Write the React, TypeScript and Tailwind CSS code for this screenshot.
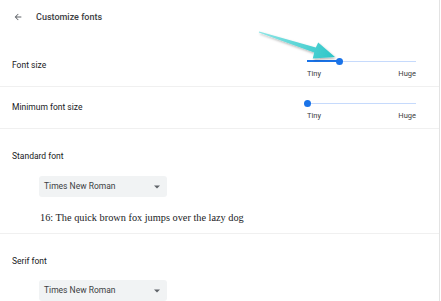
import React from "react";

function Slider({ value }: { value: number }) {
  return (
    <div className="flex w-[109px] flex-col mt-[5px]">
      <div className="relative h-[8px]">
        <div className="absolute left-0 right-0 top-[3.5px] h-[1px] bg-[#c6dafc]" />
        <div className="absolute left-0 top-[3px] h-[2px] bg-[#1a73e8]" style={{ width: `${value}px` }} />
        <div
          className="absolute top-[0.5px] h-[7px] w-[7px] rounded-full bg-[#1a73e8]"
          style={{ left: `${value - 3.5}px` }}
        />
      </div>
      <div className="mt-[4px] flex justify-between text-[7.5px] leading-[10px] text-[#3c4043]">
        <span>Tiny</span>
        <span>Huge</span>
      </div>
    </div>
  );
}

function Select() {
  return (
    <div className="ml-[39px] flex h-[21px] w-[128px] items-center justify-between rounded-[3px] bg-[#f1f3f4] pl-[5px] pr-[7px] text-[8.5px] text-[#3c4043]">
      <span>Times New Roman</span>
      <svg width="6" height="4" viewBox="0 0 6 4">
        <path d="M0 0.5 L6 0.5 L3 3.5 Z" fill="#5f6368" />
      </svg>
    </div>
  );
}

export default function App() {
  return (
    <div className="relative h-[301px] w-[441px] overflow-hidden bg-white" style={{ fontFamily: "Roboto, 'Liberation Sans', sans-serif" }}>
      <div className="h-[301px] w-[440px] border-r border-[#e3e3e3]">
        <div className="flex h-[45px] items-start pt-[11px]">
          <div className="flex h-[12px] items-center pl-[13px]">
            <svg width="10" height="10" viewBox="0 0 24 24">
              <path d="M20 11H7.83l5.59-5.59L12 4l-8 8 8 8 1.41-1.41L7.83 13H20v-2z" fill="#5f6368" />
            </svg>
          </div>
          <span className="ml-[13px] text-[9px] leading-[12px] font-medium text-[#3c4043]">Customize fonts</span>
        </div>

        <div className="flex h-[42px] items-center justify-between border-b border-[#f0f0f0] pl-[12px] pr-[23px]">
          <span className="text-[8.5px] text-[#202124]">Font size</span>
          <Slider value={32} />
        </div>

        <div className="flex h-[42px] items-center justify-between border-b border-[#f0f0f0] pl-[12px] pr-[23px]">
          <span className="text-[8.5px] text-[#202124]">Minimum font size</span>
          <Slider value={0} />
        </div>

        <div className="border-b border-[#f0f0f0] pt-[21px] pb-[8px]">
          <div className="pl-[12px] text-[8.5px] leading-[12px] text-[#202124]">Standard font</div>
          <div className="mt-[14px]">
            <Select />
          </div>
          <div
            className="mt-[14px] pl-[40px] text-[10.3px] leading-[14px] text-[#202124]"
            style={{ fontFamily: "'Liberation Serif', serif" }}
          >
            16: The quick brown fox jumps over the lazy dog
          </div>
        </div>

        <div className="pt-[21px]">
          <div className="pl-[12px] text-[8.5px] leading-[12px] text-[#202124]">Serif font</div>
          <div className="mt-[13px]">
            <Select />
          </div>
        </div>
      </div>

      <svg className="pointer-events-none absolute left-0 top-0" width="441" height="301" viewBox="0 0 441 301">
        <defs>
          <linearGradient id="ag" x1="258" y1="32" x2="334" y2="57" gradientUnits="userSpaceOnUse">
            <stop offset="0" stopColor="#8ee6e6" />
            <stop offset="1" stopColor="#2ec6c8" />
          </linearGradient>
          <filter id="sh" x="-20%" y="-50%" width="140%" height="200%">
            <feDropShadow dx="1" dy="1.5" stdDeviation="1" floodColor="#000" floodOpacity="0.3" />
          </filter>
        </defs>
        <polygon
          points="259.2,31.6 315.8,47.6 318.2,42.4 335,57 312.8,58.6 314.2,52.4 258.8,32.4"
          fill="url(#ag)"
          filter="url(#sh)"
        />
      </svg>
    </div>
  );
}
